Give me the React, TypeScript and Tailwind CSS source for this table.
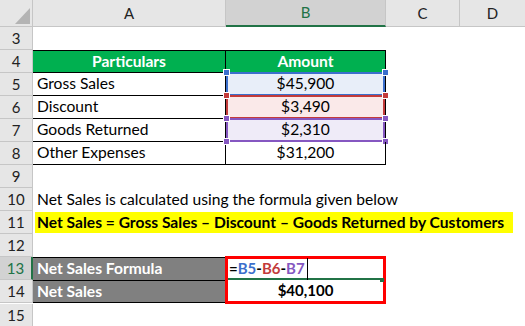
const cols = "grid grid-cols-[33px_193px_160px_74px_65px]";
const font = { fontFamily: "Lato, 'Liberation Sans', sans-serif" };

function RowHead({ n, active }: { n: number; active?: boolean }) {
  return (
    <div
      className={`flex h-[23px] items-center justify-center border-b border-r border-[#c6c6c6] text-[15px] ${
        active ? "border-r-2 border-r-[#217346] bg-[#d2d2d2] text-[#217346]" : "bg-[#e6e6e6] text-[#222]"
      }`}
    >
      {n}
    </div>
  );
}

function Handle({ pos, color }: { pos: string; color: string }) {
  return <span className={`absolute h-[7px] w-[7px] border border-white ${pos} ${color}`} />;
}

export default function App() {
  return (
    <div className="h-[326px] w-[525px] overflow-hidden bg-white text-[15.6px] text-black" style={font}>
      {/* column headers */}
      <div className={`${cols} h-[27px] bg-[#e6e6e6] text-[15px] text-[#222]`}>
        <div className="relative border-b border-r border-[#c6c6c6]">
          <svg className="absolute left-[15px] top-[8px]" width="15" height="16" viewBox="0 0 15 16">
            <polygon points="15,0 15,16 0,16" fill="#b4b4b4" />
          </svg>
        </div>
        <div className="flex items-center justify-center border-b border-r border-[#c6c6c6]">A</div>
        <div className="flex items-center justify-center border-b-2 border-r border-b-[#217346] border-r-[#c6c6c6] bg-[#d2d2d2] text-[#217346]">
          B
        </div>
        <div className="flex items-center justify-center border-b border-r border-[#c6c6c6]">C</div>
        <div className="flex items-center justify-center border-b border-[#c6c6c6]">D</div>
      </div>

      {/* row 3 */}
      <div className={cols}>
        <RowHead n={3} />
      </div>

      {/* row 4 */}
      <div className={cols}>
        <RowHead n={4} />
        <div className="flex h-[23px] items-center justify-center border-y border-r border-black bg-[#00b050] font-bold text-white">
          Particulars
        </div>
        <div className="flex h-[23px] items-center justify-center border-y border-r border-black bg-[#00b050] font-bold text-white">
          Amount
        </div>
      </div>

      {[
        { n: 5, label: "Gross Sales", value: "$45,900", box: "border-[#3b6fcc] bg-[#e8eef9]", tl: "bg-[#3b6fcc]", bl: "bg-[#c33b3b]" },
        { n: 6, label: "Discount", value: "$3,490", box: "border-[#c33b3b] bg-[#fae9e9]", tl: "bg-[#c33b3b]", bl: "bg-[#8557c1]" },
        { n: 7, label: "Goods Returned", value: "$2,310", box: "border-[#8557c1] bg-[#efebf8]", tl: "bg-[#8557c1]", bl: "bg-[#8557c1]" },
        { n: 8, label: "Other Expenses", value: "$31,200" },
      ].map((r) => (
        <div key={r.n} className={cols}>
          <RowHead n={r.n} />
          <div className="flex h-[23px] items-center border-b border-r border-black pl-[4px]">{r.label}</div>
          <div className="relative flex h-[23px] items-center justify-center border-b border-r border-black">
            {r.box && (
              <>
                <span className={`absolute inset-x-[0px] bottom-[-1px] top-[-1px] border-2 ${r.box}`} />
                <Handle pos="left-[-3px] top-[-4px]" color={r.tl} />
                <Handle pos="right-[-4px] top-[-4px]" color={r.tl} />
                {r.n === 7 && (
                  <>
                    <Handle pos="left-[-3px] bottom-[-4px]" color={r.bl} />
                    <Handle pos="right-[-4px] bottom-[-4px]" color={r.bl} />
                  </>
                )}
              </>
            )}
            <span className="relative">{r.value}</span>
          </div>
        </div>
      ))}

      <div className={cols}>
        <RowHead n={9} />
      </div>

      <div className={cols}>
        <RowHead n={10} />
        <div className="col-span-4 flex h-[23px] items-center whitespace-nowrap pl-[4px]">
          Net Sales is calculated using the formula given below
        </div>
      </div>

      <div className={cols}>
        <RowHead n={11} />
        <div className="col-span-4 flex h-[23px] items-center py-[1px] pl-[2px]">
          <span className="flex h-full items-center whitespace-nowrap bg-[#ffff00] pl-[2px] pr-[9px] font-bold">
            Net Sales = Gross Sales – Discount – Goods Returned by Customers
          </span>
        </div>
      </div>

      <div className={cols}>
        <RowHead n={12} />
      </div>

      {/* rows 13-14 */}
      <div className="grid grid-cols-[33px_193px_160px_139px]">
        <div>
          <RowHead n={13} active />
          <RowHead n={14} />
        </div>
        <div className="border-t border-black">
          <div className="flex h-[23px] items-center border-b border-r border-black bg-[#808080] pl-[4px] font-bold text-white">
            Net Sales Formula
          </div>
          <div className="flex h-[22px] items-center border-b border-r border-black bg-[#808080] pl-[4px] font-bold text-white">
            Net Sales
          </div>
        </div>
        <div className="relative ml-[-1px] mt-[-1px] h-[48px] border-[3px] border-[#ff0000] text-[15px] font-bold">
          <div className="flex h-[21px] items-center border-b-2 border-[#217346] pl-[1px]">
            <span>=</span>
            <span className="text-[#3b6fcc]">B5</span>
            <span>-</span>
            <span className="text-[#c33b3b]">B6</span>
            <span>-</span>
            <span className="text-[#8557c1]">B7</span>
            <span className="ml-[2px] h-[22px] w-px bg-black" />
          </div>
          <span className="absolute right-[-1px] top-[19px] h-[4px] w-[4px] bg-[#217346]" />
          <div className="flex h-[21px] items-center justify-center">$40,100</div>
        </div>
      </div>

      <div className={cols}>
        <RowHead n={15} />
      </div>
    </div>
  );
}
